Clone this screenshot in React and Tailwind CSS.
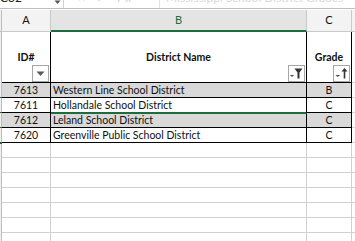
import React from "react";

const font = { fontFamily: "Lato, 'Open Sans', sans-serif" };

function FilterBtn({ kind }) {
  return (
    <div className="w-[17px] h-[17px] border border-[#a6a6a6] bg-white flex items-center justify-center">
      {kind === "plain" && (
        <svg width="11" height="11" viewBox="0 0 11 11">
          <path d="M1.5 3.5 L9.5 3.5 L5.5 8 Z" fill="#5a5a5a" />
        </svg>
      )}
      {kind === "filter" && (
        <svg width="15" height="15" viewBox="0 0 15 15">
          <path d="M1 9 L5 9 L3 11 Z" fill="#4a4a4a" />
          <path d="M5.5 2.5 L13.5 2.5 L10.5 6.5 L10.5 12.5 L8.5 12.5 L8.5 6.5 Z" fill="#333" />
        </svg>
      )}
      {kind === "sort" && (
        <svg width="15" height="15" viewBox="0 0 15 15">
          <path d="M1.5 9 L6 9 L3.75 11 Z" fill="#4a4a4a" />
          <path d="M10.5 2 L13.5 5.5 L11.3 5.5 L11.3 12.5 L9.7 12.5 L9.7 5.5 L7.5 5.5 Z" fill="#333" />
        </svg>
      )}
    </div>
  );
}

const rows = [
  { id: "7613", name: "Western Line School District", grade: "B", gray: true },
  { id: "7611", name: "Hollandale School District", grade: "C", gray: false },
  { id: "7612", name: "Leland School District", grade: "C", gray: true },
  { id: "7620", name: "Greenville Public School District", grade: "C", gray: false },
];

export default function App() {
  return (
    <div className="w-[355px] h-[241px] overflow-hidden bg-white text-[#111]" style={font}>
      {/* formula bar remnant */}
      <div className="h-[9px] border-b border-[#bdbdbd] flex items-end overflow-hidden relative">
        <div className="w-[64px] h-full border-r border-[#d0d0d0] relative">
          <span className="absolute left-[0px] top-[-11px] text-[12px] text-[#222]">C32</span>
          <svg className="absolute left-[54px] top-[0px]" width="7" height="5" viewBox="0 0 7 5">
            <path d="M0.5 0.5 L6.5 0.5 L3.5 4 Z" fill="#555" />
          </svg>
        </div>
        <div className="w-[96px] h-full border-r border-[#e2e2e2] relative">
          <span className="absolute left-[14px] top-[-11px] text-[12px] text-[#d0d0d0] tracking-[4px]">× ✓ fx</span>
        </div>
        <div className="flex-1 h-full relative">
          <span className="absolute left-[6px] top-[-11px] text-[12px] text-[#dadada] whitespace-nowrap">Mississippi School District Grades</span>
        </div>
      </div>
      <div className="h-[1px] bg-white" />
      {/* column headers */}
      <div className="flex h-[22px] text-[11px]">
        <div className="w-[2px] bg-[#f0f0f0] border-r border-[#bdbdbd] border-b" />
        <div className="w-[49px] bg-[#f3f3f3] border-r border-b border-[#c9c9c9] flex items-center justify-center">A</div>
        <div className="w-[256px] bg-[#e4e4e4] border-r border-[#c9c9c9] border-b-2 border-b-[#1e6c3c] flex items-center justify-center text-[#1e6c3c]">B</div>
        <div className="w-[45px] bg-[#f3f3f3] border-r border-b border-[#c9c9c9] flex items-center justify-center">C</div>
        <div className="flex-1 bg-[#f3f3f3] border-b border-[#c9c9c9]" />
      </div>
      {/* header row 1 */}
      <div className="flex h-[51px] text-[10.5px] font-bold">
        <div className="w-[2px] bg-[#f0f0f0] border-r border-[#bdbdbd]" />
        <div className="w-[49px] border-r border-b border-black flex flex-col items-center">
          <div className="mt-[19px] leading-[13px]">ID#</div>
          <div className="self-end mr-[1px] mt-[1px]"><FilterBtn kind="plain" /></div>
        </div>
        <div className="w-[256px] border-r border-b border-black flex flex-col items-center">
          <div className="mt-[19px] leading-[13px]">District Name</div>
          <div className="self-end mr-[1px] mt-[1px]"><FilterBtn kind="filter" /></div>
        </div>
        <div className="w-[45px] border-r border-b border-black flex flex-col items-center">
          <div className="mt-[19px] leading-[13px]">Grade</div>
          <div className="self-end mr-[1px] mt-[1px]"><FilterBtn kind="sort" /></div>
        </div>
        <div className="flex-1 border-b border-[#d4d4d4]" />
      </div>
      {/* data rows */}
      {rows.map((r, i) => (
        <div key={r.id} className="flex h-[15px] text-[10.5px] leading-[15px]">
          <div className="w-[2px] bg-[#f0f0f0] border-r border-[#bdbdbd] relative">
            <div className="absolute left-0 bottom-[-1px] w-[2px] h-[2px] bg-[#1e6c3c]" />
          </div>
          <div className={`w-[49px] border-r border-b border-black text-center ${r.gray ? "bg-[#d9d9d9]" : "bg-white"}`}>{r.id}</div>
          <div className={`w-[256px] border-r border-b ${i === 1 ? "border-b-[#1e6c3c] border-b-2 h-[16px] relative z-10" : "border-b-black"} border-r-black pl-[2px] ${r.gray ? "bg-[#d9d9d9]" : "bg-white"}`}>{r.name}</div>
          <div className={`w-[45px] border-r border-b border-black text-center ${r.gray ? "bg-[#d9d9d9]" : "bg-white"}`}>{r.grade}</div>
          <div className="flex-1 border-b border-[#d4d4d4]" />
        </div>
      ))}
      {/* empty rows */}
      {[0, 1, 2, 3, 4, 5, 6].map((k) => (
        <div key={k} className="flex h-[15px]">
          <div className="w-[2px] bg-[#f0f0f0] border-r border-[#bdbdbd]" />
          <div className="w-[49px] border-r border-b border-[#d0d0d0]" />
          <div className="w-[256px] border-r border-b border-[#d0d0d0]" />
          <div className="w-[45px] border-r border-b border-[#d0d0d0]" />
          <div className="flex-1 border-b border-[#d0d0d0]" />
        </div>
      ))}
    </div>
  );
}
